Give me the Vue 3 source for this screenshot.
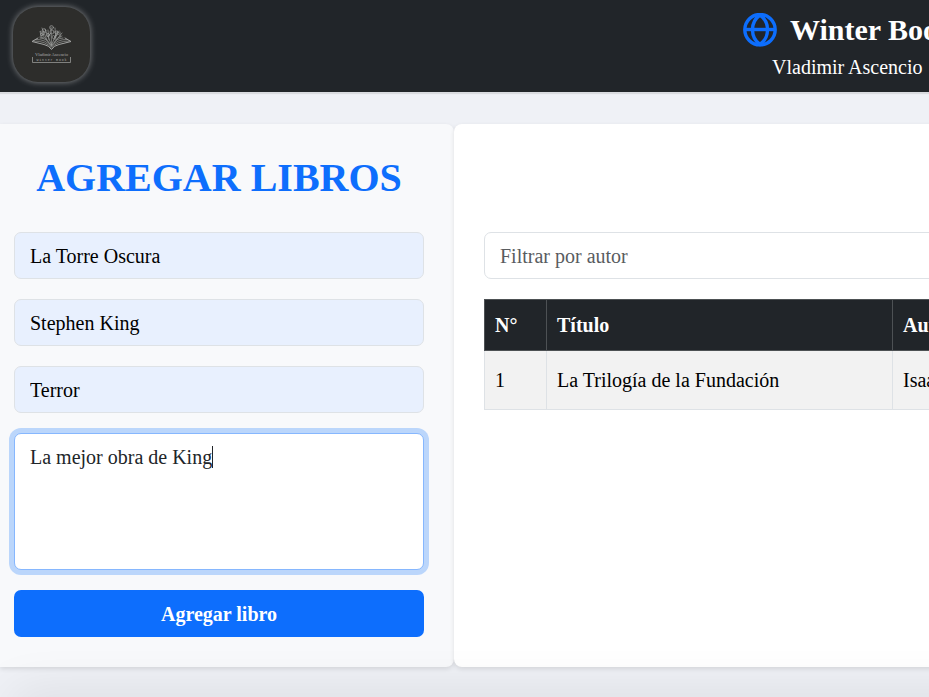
<script setup>
import { ref } from 'vue'

const book = ref({
  title: 'La Torre Oscura',
  author: 'Stephen King',
  genre: 'Terror',
  description: 'La mejor obra de King',
})
const filter = ref('')
const books = ref([{ title: 'La Trilogía de la Fundación', author: 'Isaac Asimov' }])
</script>

<template>
  <div class="page">
    <header class="header">
      <div class="logo">
        <svg viewBox="0 0 77 76" width="77" height="76" fill="none">
          <g stroke="#a3a4a3" stroke-width=".65" stroke-linejoin="round" stroke-linecap="round">
            <path d="M25 31 L19 34.5 L31 37.5 Q36 38.5 38.5 42.5 Q41 38.5 46 37.5 L58 34.5 L52 31" stroke-width="1" />
            <path d="M23 32.5 Q33 32 38.5 40 Q44 32 54 32.5" />
            <path d="M21 34 Q33 34 38.5 41 Q44 34 56 34" />
            <path d="M27 31 Q34 31 38.5 39 Q43 31 50 31" />
            <path d="M38.5 38 L38 20 M38.5 38 L32 22 M38.5 38 L44.5 24 M37 37 L28 26 M41 36 L49 26" />
            <path d="M34 33 L29 21 M43 33 L42 21 M36 33 L35 23 M41 33 L46 24" />
            <path d="M28 29 l-1 -5 l3 2 z M33 26 l-3 -2 M35 29 l3 -3 M42 29 l4 -2 M47 30 l0 -5 M31 31 l-4 -1 M45 31 l4 -2" />
            <circle cx="38.5" cy="20.5" r="1.9" />
            <circle cx="39" cy="25" r="2" />
            <circle cx="31" cy="23.5" r="1.8" />
            <circle cx="43.5" cy="25.5" r="1.5" />
            <circle cx="35" cy="28" r="1.7" />
            <circle cx="29" cy="27.5" r="1.5" />
            <circle cx="40.5" cy="30" r="1.5" />
          </g>
          <text class="logo-name" x="38.5" y="48.5" text-anchor="middle" textLength="33">Vladimir Ascencio</text>
          <text class="logo-sub" x="38.5" y="53.5" text-anchor="middle" textLength="30">Winter Book</text>
          <path d="M19.5 50 V55.5 H57.5 V50" stroke="#969795" stroke-width=".8" />
        </svg>
      </div>
      <div class="brand">
        <h1 class="brand-title">
          <svg class="globe" viewBox="0 0 34 34" width="34" height="34" fill="none" stroke="#0d6efd" stroke-width="3.4">
            <circle cx="17" cy="16.7" r="15.2" />
            <path d="M17 2 C7 9 7 24.5 17 31.5 C27 24.5 27 9 17 2 Z" />
            <path d="M2 16.5 H32" />
          </svg>
          <span>Winter Book</span>
        </h1>
        <p class="brand-owner">Vladimir Ascencio</p>
      </div>
    </header>

    <main class="main">
      <section class="panel form-panel">
        <h2 class="form-title">AGREGAR LIBROS</h2>
        <form class="form" @submit.prevent>
          <input v-model="book.title" class="control filled" type="text">
          <input v-model="book.author" class="control filled" type="text">
          <input v-model="book.genre" class="control filled" type="text">
          <div class="area-wrap">
            <textarea v-model="book.description" class="control area" spellcheck="false"></textarea>
            <span class="caret"></span>
          </div>
          <button class="submit" type="submit">Agregar libro</button>
        </form>
      </section>

      <section class="panel list-panel">
        <input v-model="filter" class="control" type="text" placeholder="Filtrar por autor">
        <table class="books">
          <colgroup>
            <col class="col-n">
            <col class="col-title">
            <col>
          </colgroup>
          <thead>
            <tr><th>N°</th><th>Título</th><th>Autor</th></tr>
          </thead>
          <tbody>
            <tr v-for="(b, i) in books" :key="b.title">
              <td>{{ i + 1 }}</td><td>{{ b.title }}</td><td>{{ b.author }}</td>
            </tr>
          </tbody>
        </table>
      </section>
    </main>
    <div class="bottom-shade"></div>
  </div>
</template>

<style>
body {
  overflow: hidden;
}
</style>

<style scoped>
* {
  box-sizing: border-box;
}
.page {
  position: relative;
  height: 697px;
  overflow: hidden;
  background: #eff1f6;
  font-family: "Liberation Serif", "Times New Roman", serif;
  font-size: 20px;
  line-height: 30px;
  color: #212529;
}
.header {
  display: flex;
  justify-content: space-between;
  width: 1360px;
  height: 92px;
  padding: 6px 418px 0 13px;
  background: #212529;
  box-shadow: 0 2px 1px rgba(0, 0, 0, .09);
}
.logo {
  flex: none;
  width: 77px;
  height: 75px;
  margin-top: 1px;
  border-radius: 25px;
  background: #2d2d2b;
  box-shadow: 0 0 6px rgba(255, 255, 255, .45);
}
.logo svg {
  display: block;
}
.logo-name {
  font-size: 4.6px;
  fill: #a8a9a7;
}
.logo-sub {
  font-family: "Liberation Mono", monospace;
  font-size: 3.3px;
  fill: #a8a9a7;
}
.brand {
  flex: none;
  width: 199px;
}
.brand-title {
  display: flex;
  align-items: center;
  gap: 13px;
  height: 48px;
  margin: 0;
  font-size: 30px;
  line-height: 48px;
  color: #fff;
  white-space: nowrap;
}
.globe {
  flex: none;
}
.brand-owner {
  margin: -2px 0 0 29px;
  color: #fff;
  white-space: nowrap;
}
.main {
  display: flex;
  width: 1360px;
  margin-top: 32px;
}
.panel {
  height: 543px;
  border-radius: 8px;
  box-shadow: 0 2px 5px rgba(0, 0, 0, .11);
}
.form-panel {
  width: 454px;
  flex: none;
  padding: 30px 30px 0 14px;
  border-radius: 0 8px 8px 0;
  background: #f8f9fb;
}
.form-title {
  margin: 0 0 30px;
  font-size: 40px;
  line-height: 48px;
  text-align: center;
  color: #0d6efd;
  white-space: nowrap;
}
.form {
  display: flex;
  flex-direction: column;
  gap: 20px;
}
.control {
  display: block;
  width: 100%;
  height: 47px;
  margin: 0;
  padding: 8px 15px 7px;
  border: 1px solid #dee2e6;
  border-radius: 7px;
  outline: none;
  background: #fff;
  font: inherit;
  color: #212529;
}
.control::placeholder {
  color: #595c5f;
  opacity: 1;
}
.filled {
  background: #e8f0fe;
  color: #000;
}
.area-wrap {
  position: relative;
}
.area {
  height: 137px;
  padding: 8px 15px;
  border-color: #86b7fe;
  box-shadow: 0 0 0 5px #bbd6fb;
  resize: none;
  overflow: hidden;
}
.caret {
  position: absolute;
  left: 198px;
  top: 13px;
  width: 1px;
  height: 22px;
  background: #212529;
}
.submit {
  height: 47px;
  padding: 1px 0 0;
  border: 0;
  border-radius: 7px;
  background: #0d6efd;
  font: inherit;
  font-weight: 700;
  color: #fff;
}
.list-panel {
  flex: 1;
  padding: 108px 30px 0;
  background: #fff;
}
.books {
  width: 100%;
  margin-top: 20px;
  border-collapse: collapse;
  table-layout: fixed;
}
.col-n {
  width: 62px;
}
.col-title {
  width: 346px;
}
.books th {
  height: 51px;
  padding: 0 10px;
  border: 1px solid #4d5154;
  background: #212529;
  color: #fff;
  text-align: left;
}
.books td {
  height: 59px;
  padding: 0 10px;
  border: 1px solid #dee2e6;
  background: #f2f2f2;
  color: #000;
}
.books tbody tr:first-child td {
  border-top-color: #4d5154;
}
.bottom-shade {
  position: absolute;
  left: 15px;
  right: -60px;
  bottom: -30px;
  height: 30px;
  box-shadow: 0 0 50px 3px rgba(0, 0, 0, .1);
}
</style>
